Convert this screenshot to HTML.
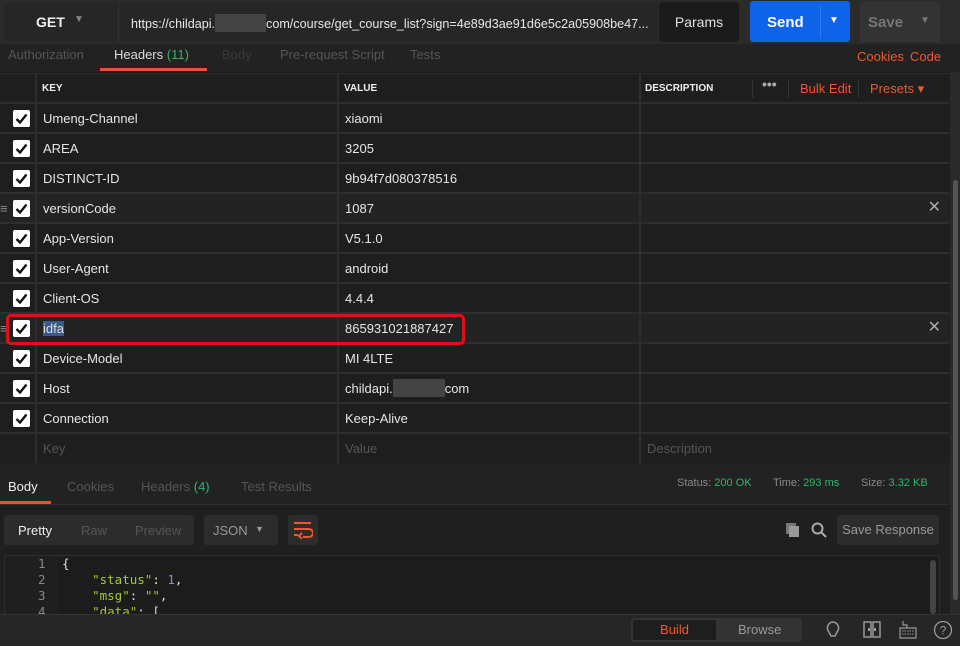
<!DOCTYPE html>
<html><head><meta charset="utf-8"><style>
*{box-sizing:border-box;margin:0;padding:0}
body{width:960px;height:646px;background:#1f1f1f;font-family:"Liberation Sans","DejaVu Sans",sans-serif;color:#e0e0e0;position:relative;overflow:hidden;font-size:13px}
.abs{position:absolute}
.top{left:0;top:0;width:960px;height:44px;background:#2b2b2b}
.get{left:4px;top:2px;width:114px;height:40px;background:#262626;border-radius:3px}
.url{left:118px;top:2px;width:540px;height:40px;background:#262626;border-left:1px solid #333;overflow:hidden}
.params{left:659px;top:2px;width:80px;height:40px;background:#1b1b1b;border-radius:3px;text-align:center;line-height:40px;font-size:14px}
.send{left:750px;top:1px;width:100px;height:41px;background:#0e63e8;border-radius:3px}
.save{left:860px;top:1px;width:80px;height:41px;background:#333;border-radius:3px}
.tabs{left:0;top:44px;width:960px;height:28px;background:#222;font-size:13px;color:#555}
.tbl{left:0;top:72px;width:949px;height:391px;background:#1c1c1c}
.hdr{top:73px;height:29px;background:#1e1e1e;font-size:10px;font-weight:bold;line-height:29px;color:#eee}
.row{left:0;width:949px;height:30px;border-top:2px solid #2e2e2e;background:#1e1e1e}
.cell{position:absolute;top:1px;height:28px;line-height:28px;font-size:13px;color:#e6e6e6}
.cb{position:absolute;left:13px;top:6px;width:17px;height:17px;background:#fff;border-radius:2px}
.vline{position:absolute;top:73px;width:2px;height:390px;background:#2e2e2e}
.x{position:absolute;right:8px;top:0;color:#aaa;font-size:16px;line-height:28px}
.gr{color:#2fb56a}
.or{color:#f0582d}
</style></head><body>
<svg width="0" height="0" style="position:absolute"><symbol id="ck" viewBox="0 0 17 17"><rect width="17" height="17" rx="2" fill="#fff"/><path d="M3.5 9l3.5 3.5 6.5-8" stroke="#111" stroke-width="2.4" fill="none"/></symbol></svg>
<div class="abs top"></div>
<div class="abs get"><span class="abs" style="left:32px;top:12px;font-size:14px;font-weight:bold;color:#eee">GET</span><span class="abs" style="left:70px;top:12px;color:#888;font-size:10px">▼</span></div>
<div class="abs url"><span class="abs" style="left:12px;top:12px;font-size:12.6px;white-space:nowrap;color:#e8e8e8">https://childapi.<span style="display:inline-block;width:51px;height:18px;background:#444;vertical-align:-4px"></span>com/course/get_course_list?sign=4e89d3ae91d6e5c2a05908be47...</span></div>
<div class="abs params">Params</div>
<div class="abs send"><span class="abs" style="left:17px;top:13px;font-size:15px;font-weight:bold;color:#fff">Send</span><span class="abs" style="left:70px;top:4px;width:1px;height:33px;background:#2d7af0"></span><span class="abs" style="left:79px;top:14px;color:#fff;font-size:10px">▼</span></div>
<div class="abs save"><span class="abs" style="left:8px;top:13px;font-size:15px;font-weight:bold;color:#777">Save</span><span class="abs" style="left:60px;top:14px;color:#777;font-size:10px">▼</span></div>
<div class="abs" style="left:950px;top:44px;width:10px;height:602px;background:#2a2a2a"></div>
<div class="abs" style="left:953px;top:180px;width:5px;height:420px;background:#555;border-radius:3px"></div>
<div class="abs tabs">
<span class="abs" style="left:8px;top:3px">Authorization</span>
<span class="abs" style="left:114px;top:3px;color:#ddd">Headers <span class="gr">(11)</span></span>
<span class="abs" style="left:100px;top:24px;width:107px;height:3px;background:#e8522c"></span>
<span class="abs" style="left:222px;top:3px;color:#3a3a3a">Body</span>
<span class="abs" style="left:280px;top:3px">Pre-request Script</span>
<span class="abs" style="left:410px;top:3px">Tests</span>
<span class="abs or" style="left:857px;top:5px">Cookies</span>
<span class="abs or" style="left:910px;top:5px">Code</span>
</div>
<div class="abs tbl"></div>
<div class="abs hdr" style="left:0;width:949px;border-top:1px solid #2e2e2e">
<span class="abs" style="left:42px">KEY</span><span class="abs" style="left:344px">VALUE</span><span class="abs" style="left:645px">DESCRIPTION</span>
<span class="abs" style="left:752px;top:6px;width:1px;height:18px;background:#333"></span>
<span class="abs" style="left:762px;top:-4px;color:#aaa;font-size:14px">•••</span>
<span class="abs" style="left:788px;top:6px;width:1px;height:18px;background:#333"></span>
<span class="abs or" style="left:800px;font-size:13px;font-weight:normal">Bulk Edit</span>
<span class="abs" style="left:858px;top:6px;width:1px;height:18px;background:#333"></span>
<span class="abs or" style="left:870px;font-size:13px;font-weight:normal">Presets ▾</span>
</div>
<div class="abs row" style="top:102px"><svg class="cb"><use href="#ck"/></svg><span class="cell" style="left:43px">Umeng-Channel</span><span class="cell" style="left:345px">xiaomi</span></div>
<div class="abs row" style="top:132px"><svg class="cb"><use href="#ck"/></svg><span class="cell" style="left:43px">AREA</span><span class="cell" style="left:345px">3205</span></div>
<div class="abs row" style="top:162px"><svg class="cb"><use href="#ck"/></svg><span class="cell" style="left:43px">DISTINCT-ID</span><span class="cell" style="left:345px">9b94f7d080378516</span></div>
<div class="abs row" style="top:192px;background:#232323"><span class="cell" style="left:0;color:#888">≡</span><svg class="cb"><use href="#ck"/></svg><span class="cell" style="left:43px">versionCode</span><span class="cell" style="left:345px">1087</span><span class="x">✕</span></div>
<div class="abs row" style="top:222px"><svg class="cb"><use href="#ck"/></svg><span class="cell" style="left:43px">App-Version</span><span class="cell" style="left:345px">V5.1.0</span></div>
<div class="abs row" style="top:252px"><svg class="cb"><use href="#ck"/></svg><span class="cell" style="left:43px">User-Agent</span><span class="cell" style="left:345px">android</span></div>
<div class="abs row" style="top:282px"><svg class="cb"><use href="#ck"/></svg><span class="cell" style="left:43px">Client-OS</span><span class="cell" style="left:345px">4.4.4</span></div>
<div class="abs row" style="top:312px;background:#232323"><span class="cell" style="left:0;color:#888">≡</span><svg class="cb"><use href="#ck"/></svg><span class="cell" style="left:43px"><span style="background:#3a5a8a;color:#ddd">idfa</span></span><span class="cell" style="left:345px">865931021887427</span><span class="x">✕</span></div>
<div class="abs row" style="top:342px"><svg class="cb"><use href="#ck"/></svg><span class="cell" style="left:43px">Device-Model</span><span class="cell" style="left:345px">MI 4LTE</span></div>
<div class="abs row" style="top:372px"><svg class="cb"><use href="#ck"/></svg><span class="cell" style="left:43px">Host</span><span class="cell" style="left:345px">childapi.<span style="display:inline-block;width:52px;height:18px;background:#444;vertical-align:-4px"></span>com</span></div>
<div class="abs row" style="top:402px"><svg class="cb"><use href="#ck"/></svg><span class="cell" style="left:43px">Connection</span><span class="cell" style="left:345px">Keep-Alive</span></div>
<div class="abs row" style="top:432px"><span class="cell" style="left:43px;color:#555">Key</span><span class="cell" style="left:345px;color:#555">Value</span><span class="cell" style="left:647px;color:#555">Description</span></div>
<div class="vline" style="left:35px"></div>
<div class="vline" style="left:337px"></div>
<div class="vline" style="left:639px"></div>
<div class="abs" style="left:6px;top:314px;width:459px;height:31px;border:3px solid #e0101a;border-radius:5px"></div>
<div class="abs" style="left:0;top:463px;width:950px;height:42px;background:#222;border-bottom:1px solid #2e2e2e"></div>
<span class="abs" style="left:8px;top:479px;color:#eee">Body</span>
<span class="abs" style="left:0;top:501px;width:51px;height:3px;background:#e8522c"></span>
<span class="abs" style="left:67px;top:479px;color:#555">Cookies</span>
<span class="abs" style="left:141px;top:479px;color:#555">Headers <span class="gr">(4)</span></span>
<span class="abs" style="left:241px;top:479px;color:#555">Test Results</span>
<span class="abs" style="left:677px;top:477px;font-size:11px;color:#888">Status: <span class="gr">200 OK</span></span>
<span class="abs" style="left:773px;top:477px;font-size:11px;color:#888">Time: <span class="gr">293 ms</span></span>
<span class="abs" style="left:861px;top:477px;font-size:11px;color:#888">Size: <span class="gr">3.32 KB</span></span>
<div class="abs" style="left:4px;top:515px;width:190px;height:30px;background:#2c2c2c;border-radius:3px"></div>
<span class="abs" style="left:18px;top:523px;color:#eee">Pretty</span>
<span class="abs" style="left:81px;top:523px;color:#555">Raw</span>
<span class="abs" style="left:135px;top:523px;color:#555">Preview</span>
<div class="abs" style="left:204px;top:515px;width:74px;height:30px;background:#2c2c2c;border-radius:3px"></div>
<span class="abs" style="left:213px;top:523px;color:#999">JSON</span><span class="abs" style="left:255px;top:524px;color:#999;font-size:9px">▼</span>
<div class="abs" style="left:288px;top:515px;width:30px;height:30px;background:#2c2c2c;border-radius:3px"></div>
<svg class="abs" style="left:293px;top:521px" width="20" height="18"><path d="M1 2h17M1 8h15a4 4 0 0 1 0 8h-6M1 14h4" stroke="#f0582d" stroke-width="2" fill="none"/><path d="M9 12l-3 3 3 3" stroke="#f0582d" stroke-width="2" fill="none"/></svg>
<svg class="abs" style="left:785px;top:522px" width="16" height="16"><rect x="1" y="1" width="10" height="11" fill="#777"/><rect x="4" y="4" width="10" height="11" fill="#999"/></svg>
<svg class="abs" style="left:811px;top:522px" width="16" height="16"><circle cx="6.5" cy="6.5" r="5" stroke="#aaa" stroke-width="2" fill="none"/><path d="M10 10l5 5" stroke="#aaa" stroke-width="2"/></svg>
<div class="abs" style="left:837px;top:515px;width:102px;height:30px;background:#2c2c2c;border-radius:3px;text-align:center;line-height:30px;color:#999">Save Response</div>
<div class="abs" style="left:4px;top:555px;width:936px;height:60px;background:#1c1c1c;border:1px solid #2e2e2e"></div>
<div class="abs" style="left:5px;top:556px;width:53px;height:58px;background:#1f1f1f"></div>
<div class="abs" style="left:930px;top:560px;width:6px;height:54px;background:#444;border-radius:3px"></div>
<div class="abs" style="left:0;top:556px;font-family:'DejaVu Sans Mono','Liberation Mono',monospace;font-size:12.5px;line-height:16px;color:#888;height:58px;overflow:hidden;width:930px">
<div style="position:absolute;left:38px;top:0">1<br>2<br>3<br>4</div>
<div style="position:absolute;left:62px;top:0;color:#ddd;white-space:pre">{
    <span style="color:#a5c63b">"status"</span>: <span style="color:#a37ce0">1</span>,
    <span style="color:#a5c63b">"msg"</span>: <span style="color:#a5c63b">""</span>,
    <span style="color:#a5c63b">"data"</span>: [</div>
</div>
<div class="abs" style="left:0;top:614px;width:960px;height:32px;background:#262626;border-top:1px solid #333"></div>
<div class="abs" style="left:631px;top:618px;width:171px;height:24px;background:#333;border-radius:3px"></div>
<div class="abs" style="left:633px;top:620px;width:83px;height:20px;background:#1e1e1e;border-radius:2px;text-align:center;line-height:20px;color:#f0582d">Build</div>
<span class="abs" style="left:738px;top:622px;color:#999">Browse</span>
<svg class="abs" style="left:824px;top:620px" width="18" height="20"><path d="M9 2a6 6 0 0 1 4 10l-2 4h-4l-2-4a6 6 0 0 1 4-10z" stroke="#999" stroke-width="1.5" fill="none"/></svg>
<svg class="abs" style="left:863px;top:621px" width="18" height="18"><rect x="1" y="1" width="7" height="15" stroke="#999" fill="none" stroke-width="1.5"/><rect x="10" y="1" width="7" height="15" stroke="#999" fill="none" stroke-width="1.5"/><rect x="5" y="7" width="2" height="3" fill="#999"/><rect x="11" y="7" width="2" height="3" fill="#999"/></svg>
<svg class="abs" style="left:899px;top:620px" width="18" height="20"><path d="M4 1v4h4v3M1 8h16v10H1z" stroke="#999" fill="none" stroke-width="1.2"/><path d="M3 11h12M3 14h12" stroke="#999" stroke-dasharray="1.5 1"/></svg>
<svg class="abs" style="left:933px;top:620px" width="20" height="20"><circle cx="10" cy="10" r="8.5" stroke="#999" fill="none" stroke-width="1.3"/><text x="10" y="14.5" text-anchor="middle" fill="#999" font-size="12" font-family="Liberation Sans">?</text></svg>
</body></html>
